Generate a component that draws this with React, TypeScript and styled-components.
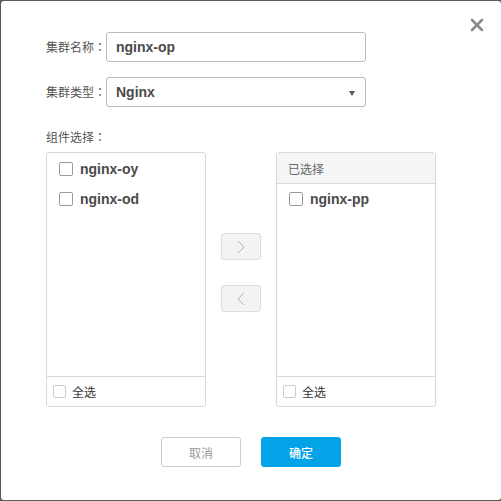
import React from "react";
import styled, { createGlobalStyle } from "styled-components";

const Global = createGlobalStyle`
  html, body { margin: 0; padding: 0; background: #5a5a5a; overflow: hidden; }
  * { box-sizing: border-box; }
`;

const Dialog = styled.div`
  position: relative;
  margin: 1px 0 0 1px;
  width: 500px;
  height: 499px;
  background: #fff;
  border-radius: 3px;
  padding: 31px 0 0 45px;
  font-family: "Liberation Sans", "Noto Sans CJK SC", sans-serif;
`;

const Close = styled.button`
  position: absolute;
  top: 17px;
  right: 17px;
  width: 14px;
  height: 14px;
  padding: 0;
  border: 0;
  background: none;
  display: flex;
  cursor: pointer;
`;

const FormRow = styled.div<{ $mb: number }>`
  display: flex;
  align-items: center;
  margin-bottom: ${(p) => p.$mb}px;
`;

const Label = styled.span`
  width: 60px;
  flex-shrink: 0;
  white-space: nowrap;
  font-size: 12px;
  color: #555;
  font-family: "Noto Sans CJK SC", sans-serif;
  line-height: 18px;
`;

const Colon = styled.span`
  font-family: "Noto Sans CJK TC", sans-serif;
`;

const Field = styled.div`
  position: relative;
  width: 260px;
  height: 30px;
  border: 1px solid #bbb;
  border-radius: 3px;
  display: flex;
  align-items: center;
  padding-left: 9px;
  font-size: 14px;
  font-weight: bold;
  color: #4a4a4a;
`;

const Caret = styled.span`
  position: absolute;
  right: 10px;
  top: 13px;
  width: 0;
  height: 0;
  border-left: 3.5px solid transparent;
  border-right: 3.5px solid transparent;
  border-top: 5px solid #555;
`;

const SectionLabel = styled.div`
  font-size: 12px;
  color: #555;
  font-family: "Noto Sans CJK SC", sans-serif;
  line-height: 18px;
  margin-top: 21px;
  margin-bottom: 6px;
`;

const Transfer = styled.div`
  display: flex;
  align-items: flex-start;
`;

const Panel = styled.div`
  width: 160px;
  height: 255px;
  border: 1px solid #d9d9d9;
  border-radius: 3px;
  display: flex;
  flex-direction: column;
`;

const PanelHeader = styled.div`
  height: 31px;
  background: #f5f5f5;
  border-bottom: 1px solid #d9d9d9;
  display: flex;
  align-items: center;
  padding-left: 11px;
  font-family: "Noto Sans CJK SC", sans-serif;
  font-size: 12px;
  color: #666;
`;

const List = styled.div<{ $pt: number }>`
  flex: 1;
  padding-top: ${(p) => p.$pt}px;
`;

const Item = styled.label`
  height: 30px;
  display: flex;
  align-items: center;
  padding-left: 12px;
  gap: 7px;
  font-size: 14px;
  font-weight: bold;
  color: #4a4a4a;
`;

const Box = styled.span<{ $size: number; $color: string }>`
  width: ${(p) => p.$size}px;
  height: ${(p) => p.$size}px;
  border: 1px solid ${(p) => p.$color};
  border-radius: 2px;
  background: #fff;
  flex-shrink: 0;
`;

const Footer = styled.div`
  height: 30px;
  border-top: 1px solid #d9d9d9;
  display: flex;
  align-items: center;
  padding-left: 6px;
  gap: 6px;
  font-family: "Noto Sans CJK SC", sans-serif;
  font-size: 12px;
  color: #333;
`;

const Mover = styled.div`
  width: 70px;
  display: flex;
  flex-direction: column;
  align-items: center;
  padding-top: 81px;
  padding-right: 1px;
  gap: 25px;
`;

const MoveBtn = styled.button`
  width: 40px;
  height: 27px;
  border: 1px solid #ddd;
  border-radius: 3px;
  background: #f3f3f3;
  display: flex;
  align-items: center;
  justify-content: center;
  padding: 0;
`;

const Actions = styled.div`
  display: flex;
  justify-content: center;
  gap: 20px;
  margin-top: 30px;
  margin-left: -45px;
`;

const Btn = styled.button<{ $primary?: boolean }>`
  width: 80px;
  height: 30px;
  border-radius: 3px;
  border: 1px solid ${(p) => (p.$primary ? "#03a3e8" : "#ccc")};
  background: ${(p) => (p.$primary ? "#03a3e8" : "#fff")};
  color: ${(p) => (p.$primary ? "#fff" : "#999")};
  font-family: "Noto Sans CJK SC", sans-serif;
  font-size: 12px;
  font-weight: ${(p) => (p.$primary ? 500 : 400)};
  padding: 0;
`;

const Chevron = ({ dir }: { dir: "left" | "right" }) => (
  <svg width="8" height="14" viewBox="0 0 8 14">
    <polyline
      points={dir === "right" ? "1,1 7,7 1,13" : "7,1 1,7 7,13"}
      fill="none"
      stroke="#b0b0b0"
      strokeWidth="1"
    />
  </svg>
);

export default function App() {
  return (
    <>
      <Global />
      <Dialog>
        <Close aria-label="close">
          <svg width="14" height="14" viewBox="0 0 14 14">
            <path d="M2 2 L12 12 M12 2 L2 12" stroke="#8a8a8a" strokeWidth="2.6" strokeLinecap="round" />
          </svg>
        </Close>
        <FormRow $mb={15}>
          <Label>
            集群名称<Colon>：</Colon>
          </Label>
          <Field>nginx-op</Field>
        </FormRow>
        <FormRow $mb={0}>
          <Label>
            集群类型<Colon>：</Colon>
          </Label>
          <Field>
            Nginx
            <Caret />
          </Field>
        </FormRow>
        <SectionLabel>
          组件选择<Colon>：</Colon>
        </SectionLabel>
        <Transfer>
          <Panel>
            <List $pt={1}>
              <Item>
                <Box $size={14} $color="#999" />
                nginx-oy
              </Item>
              <Item>
                <Box $size={14} $color="#999" />
                nginx-od
              </Item>
            </List>
            <Footer>
              <Box $size={13} $color="#ccc" />
              全选
            </Footer>
          </Panel>
          <Mover>
            <MoveBtn>
              <Chevron dir="right" />
            </MoveBtn>
            <MoveBtn>
              <Chevron dir="left" />
            </MoveBtn>
          </Mover>
          <Panel>
            <PanelHeader>已选择</PanelHeader>
            <List $pt={0}>
              <Item>
                <Box $size={14} $color="#999" />
                nginx-pp
              </Item>
            </List>
            <Footer>
              <Box $size={13} $color="#ccc" />
              全选
            </Footer>
          </Panel>
        </Transfer>
        <Actions>
          <Btn>取消</Btn>
          <Btn $primary>确定</Btn>
        </Actions>
      </Dialog>
    </>
  );
}
